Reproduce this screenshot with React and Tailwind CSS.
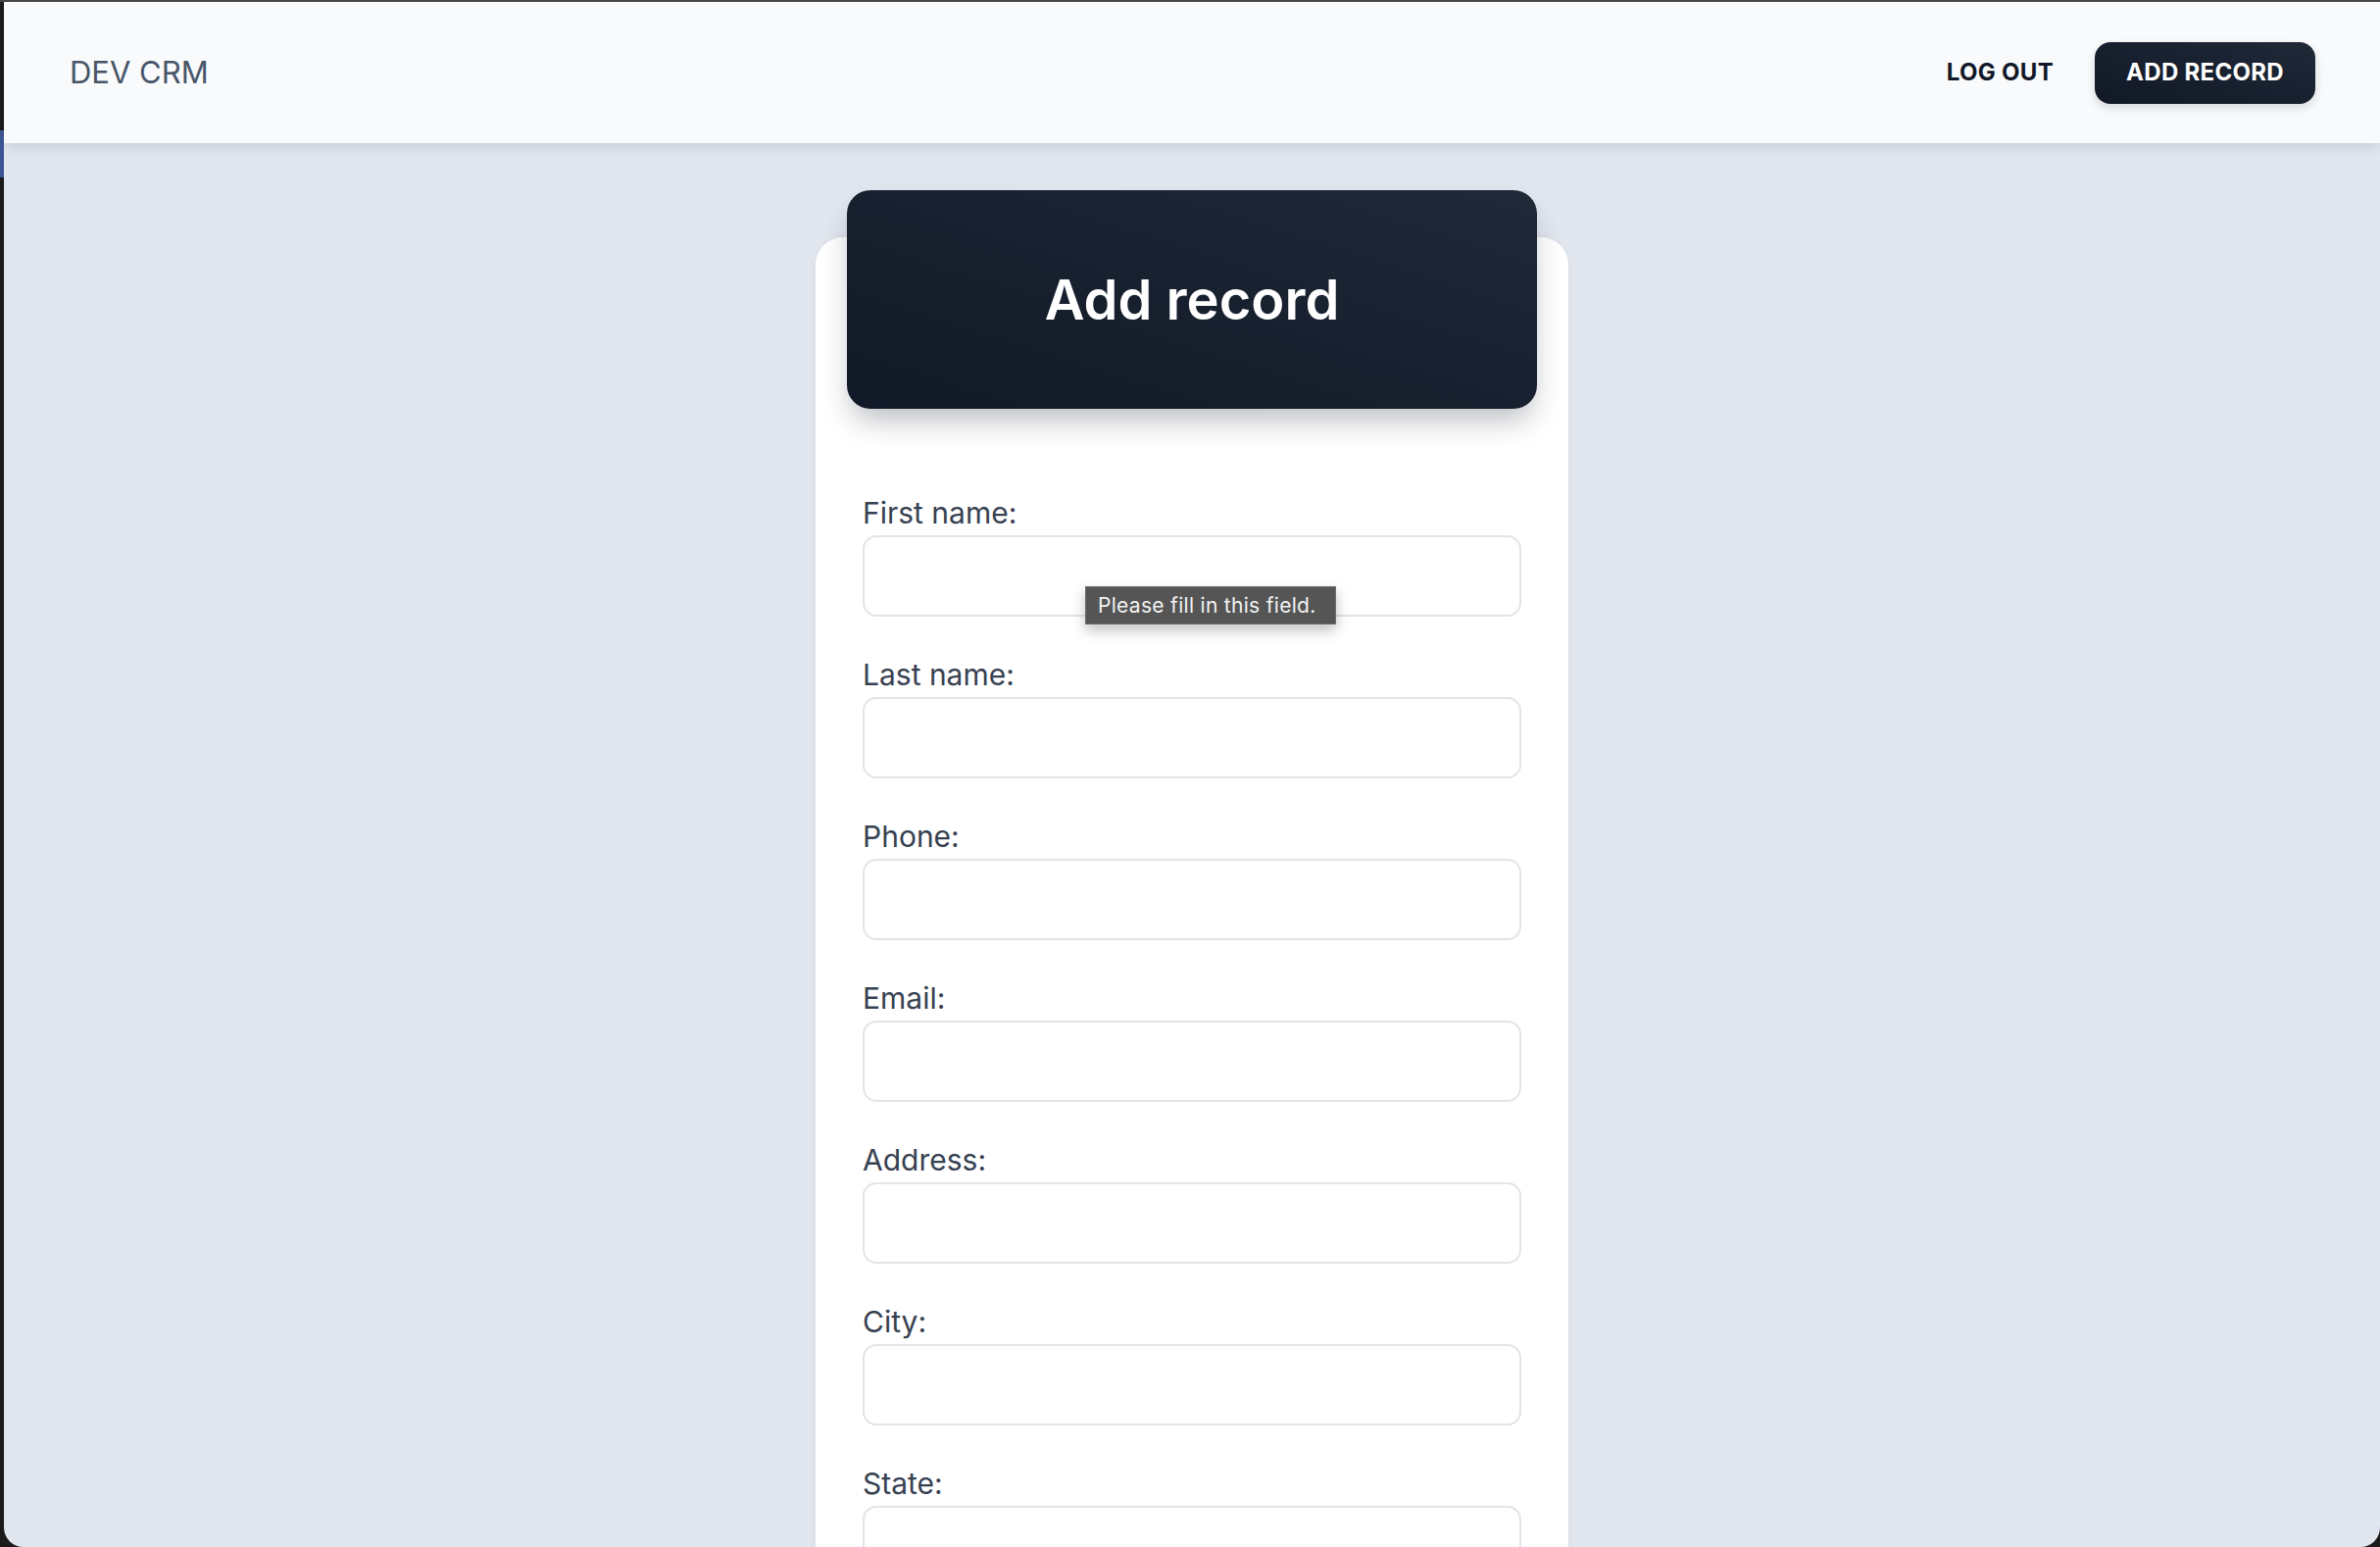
import React from 'react';

const FIELDS = ['First name:', 'Last name:', 'Phone:', 'Email:', 'Address:', 'City:', 'State:', 'Zipcode:'];

function Field({ label, showHint }) {
  return (
    <div className="mb-[37px]">
      <label className="block h-[45px] text-[30px] leading-[45px] text-[#374151]">{label}</label>
      <div className="relative">
        <input
          type="text"
          required
          className="block h-[83px] w-full rounded-[14px] border-2 border-[#e4e4ea] bg-white px-[24px] text-[28px] outline-none"
        />
        {showHint && (
          <div className="absolute left-[227px] top-[52px] z-20 flex h-[39px] w-[256px] items-center border border-[#6e6e6e] bg-[#555555] px-[12px] text-[21px] tracking-[0.3px] whitespace-nowrap text-[#f2f2f2] shadow-[0_6px_14px_rgba(0,0,0,0.25)]">
            Please fill in this field.
          </div>
        )}
      </div>
    </div>
  );
}

export default function App() {
  return (
    <div className="flex h-[1578px] w-[2428px] flex-col overflow-hidden bg-[#1b1b1b] font-['Inter',sans-serif]">
      <div className="h-[2px] shrink-0 bg-[#474747]" />
      <div className="flex min-h-0 flex-1">
        {/* window edge */}
        <div className="flex w-[4px] shrink-0 flex-col">
          <div className="h-[131px]" />
          <div className="h-[48px] bg-[#3c5594]" />
        </div>

        <div className="flex min-w-0 flex-1 flex-col overflow-hidden rounded-b-[20px] bg-[#e2e7ef]">
          <nav className="relative z-10 flex h-[144px] shrink-0 items-center justify-between bg-[#f9fafb] pl-[67px] pr-[66px] shadow-[0_4px_14px_rgba(15,23,42,0.12)]">
            <span className="text-[31px] leading-[48px] text-[#475569]">DEV CRM</span>
            <div className="flex items-center gap-x-[10px]">
              <button className="rounded-[16px] px-[32px] py-[16px] text-[24px] font-bold leading-[32px] tracking-[0.3px] text-[#111827]">
                LOG OUT
              </button>
              <button className="h-[63px] rounded-[16px] bg-gradient-to-tr from-[#111827] to-[#1f2937] px-[32px] text-[24px] font-bold leading-[32px] tracking-[0.3px] text-white shadow-[0_4px_10px_rgba(17,24,39,0.15)]">
                ADD RECORD
              </button>
            </div>
          </nav>

          <main className="flex-1 pt-[96px]">
            <div className="mx-auto flex w-[768px] flex-col rounded-[28px] bg-white shadow-[0_2px_8px_rgba(15,23,42,0.06)]">
              <div className="mx-[32px] -mt-[48px] flex h-[223px] items-center justify-center rounded-[24px] bg-gradient-to-tr from-[#111827] to-[#1f2937] shadow-[0_16px_30px_-6px_rgba(17,24,39,0.3)]">
                <h3 className="text-[56px] font-semibold leading-[70px] text-white">Add record</h3>
              </div>
              <form className="px-[48px] pt-[84px] pb-[48px]">
                {FIELDS.map((f, i) => (
                  <Field key={f} label={f} showHint={i === 0} />
                ))}
              </form>
            </div>
          </main>
        </div>
      </div>
    </div>
  );
}
